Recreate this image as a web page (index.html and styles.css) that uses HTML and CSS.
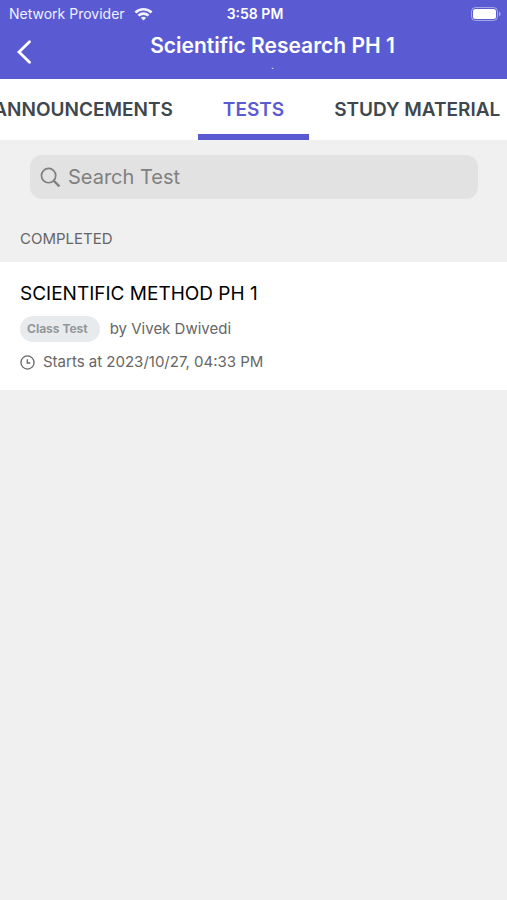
FILE: index.html
```html
<!DOCTYPE html>
<html lang="en">
<head>
    <meta charset="UTF-8">
    <meta name="viewport" content="width=device-width, initial-scale=1.0">
    <title>Scientific Research PH 1</title>
    <link rel="stylesheet" href="styles.css">
</head>
<body>
    <header class="header">
        <div class="status-bar">
            <div class="carrier">
                <span>Network Provider</span>
                <svg class="wifi" viewBox="0 0 20 14" fill="none" stroke="currentColor" stroke-width="2.8">
                    <path d="M1.5 5.4C6.2 .9 13.8 .9 18.5 5.4"/>
                    <path d="M4.7 8.7c3-2.8 7.6-2.8 10.6 0"/>
                    <path d="M10 13.8 7.2 11c1.6-1.5 4-1.5 5.600 0z" fill="currentColor" stroke="none"/>
                </svg>
            </div>
            <span class="time">3:58 PM</span>
            <svg class="battery" viewBox="0 0 31 14">
                <rect x="1.5" y=".5" width="26" height="13" rx="4" fill="none" stroke="#fff" stroke-opacity=".45"/>
                <rect x="3" y="2" width="23" height="10" rx="2.5" fill="#fff"/>
                <path d="M29 4.8c2 .6 2 3.8 0 4.4z" fill="#fff" fill-opacity=".5"/>
            </svg>
        </div>
        <div class="nav">
            <button class="back" type="button" aria-label="Back">
                <svg viewBox="0 0 14 24" fill="none" stroke="currentColor" stroke-width="2.8" stroke-linecap="round">
                    <path d="M12.500 1.800 2 12l10.500 10.200"/>
                </svg>
            </button>
            <div class="heading">
                <h1>Scientific Research PH 1</h1>
                <p>.</p>
            </div>
        </div>
    </header>

    <nav class="tabs">
        <a class="tab tab-prev" href="#announcements">ANNOUNCEMENTS</a>
        <a class="tab active" href="#tests" aria-current="page">TESTS</a>
        <a class="tab" href="#material">STUDY MATERIAL</a>
    </nav>

    <main>
        <label class="search">
            <svg viewBox="0 0 22 22" fill="none" stroke="currentColor" stroke-width="1.8">
                <circle cx="9" cy="9" r="7.5"/>
                <path d="m14.3 14.3 6 6" stroke-width="2.4"/>
            </svg>
            <input type="search" placeholder="Search Test" aria-label="Search Test">
        </label>

        <h2 class="section-title">COMPLETED</h2>

        <article class="test">
            <h3>SCIENTIFIC METHOD PH 1</h3>
            <div class="test-row">
                <span class="badge">Class Test</span>
                <span>by Vivek Dwivedi</span>
            </div>
            <div class="test-row starts">
                <svg viewBox="0 0 16 16" fill="none" stroke="currentColor" stroke-width="1.4">
                    <circle cx="8" cy="8" r="7"/>
                    <path d="M7.8 4.500v4h3"/>
                </svg>
                <span>Starts at 2023/10/27, 04:33 PM</span>
            </div>
        </article>
    </main>
</body>
</html>
```

FILE: styles.css
```css
:root {
    --primary-color: #5a5bd3;
    --background-color: #f0f0f0;
    --tab-color: #3d474d;
    --muted-color: #666;
}

* {
    margin: 0;
    padding: 0;
    box-sizing: border-box;
}

body {
    font-family: Inter, "Liberation Sans", sans-serif;
    background-color: var(--background-color);
    color: var(--muted-color);
    overflow-x: hidden;
}

svg {
    display: block;
    flex-shrink: 0;
}

.header {
    background-color: var(--primary-color);
    color: #fff;
}

.status-bar {
    display: grid;
    grid-template-columns: 1fr auto 1fr;
    align-items: center;
    height: 27px;
    padding: 0 6px 0 9px;
    font-size: 14px;
}

.carrier {
    display: flex;
    align-items: center;
    gap: 9px;
    color: #f0f0ff;
}

.wifi {
    width: 19px;
    height: 14px;
}

.time {
    font-weight: 600;
}

.battery {
    width: 31px;
    height: 14px;
    justify-self: end;
}

.nav {
    display: flex;
    height: 52px;
    padding-bottom: 3px;
}

.back {
    display: flex;
    align-items: center;
    width: 38px;
    padding-left: 17px;
    border: none;
    background: none;
    color: #fff;
    cursor: pointer;
}

.back svg {
    width: 14px;
    height: 24px;
}

.heading {
    flex: 1;
    padding-top: 6px;
    text-align: center;
}

.heading h1 {
    font-size: 21px;
    font-weight: 600;
    line-height: 26px;
}

.heading p {
    font-size: 10px;
    line-height: 12px;
}

.tabs {
    display: grid;
    grid-template-columns: minmax(0, 1fr) auto minmax(0, 1fr);
    background-color: #fff;
    overflow: hidden;
}

.tab {
    padding: 6px 25px 0;
    border-bottom: 6px solid transparent;
    color: var(--tab-color);
    font-size: 19px;
    font-weight: 600;
    line-height: 49px;
    text-decoration: none;
    white-space: nowrap;
}

.tab-prev {
    justify-self: end;
}

.tab.active {
    color: var(--primary-color);
    border-bottom-color: var(--primary-color);
}

.search {
    display: flex;
    align-items: center;
    gap: 7px;
    height: 44px;
    margin: 15px 29px 0 30px;
    padding: 0 10px;
    border-radius: 12px;
    background-color: #e2e2e2;
    color: #808080;
}

.search svg {
    width: 21px;
    height: 21px;
}

.search input {
    flex: 1;
    min-width: 0;
    border: none;
    background: none;
    outline: none;
    color: #333;
    font-family: inherit;
    font-size: 20px;
}

.search input::placeholder {
    color: #808080;
}

.section-title {
    padding: 29px 20px 12px;
    font-size: 15px;
    font-weight: 400;
    line-height: 22px;
}

.test {
    padding: 18px 20px 15px;
    background-color: #fff;
    font-size: 15px;
}

.test h3 {
    color: #000;
    font-size: 19px;
    font-weight: 400;
    line-height: 28px;
}

.test-row {
    display: flex;
    align-items: center;
    gap: 10px;
    margin-top: 7px;
    line-height: 26px;
}

.test h3 + .test-row {
    margin-top: 8px;
}

.badge {
    padding: 0 12px 0 7px;
    border-radius: 13px;
    background-color: #e8ebed;
    color: #92979a;
    font-size: 12px;
    font-weight: 700;
}

.starts {
    gap: 8px;
}

.starts svg {
    width: 15px;
    height: 15px;
}
```
